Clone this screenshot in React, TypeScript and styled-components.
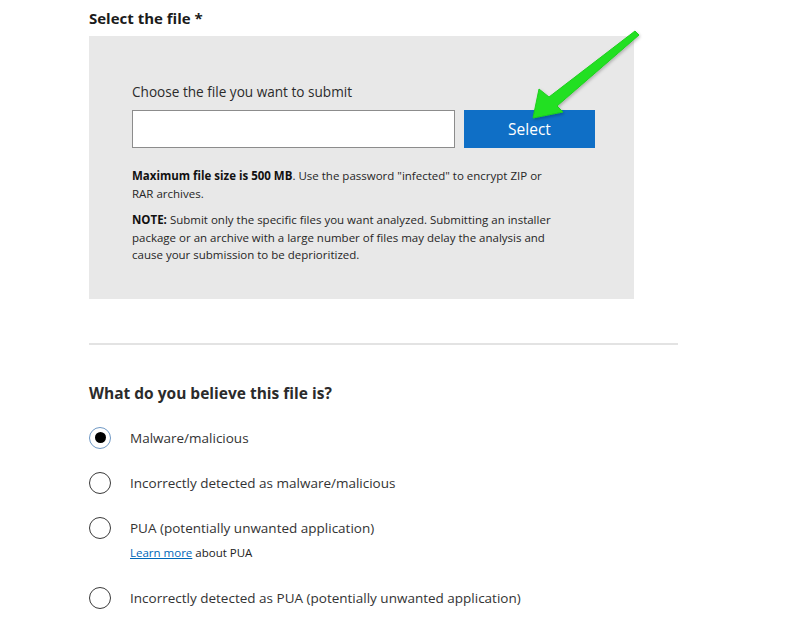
import React from "react";
import styled, { createGlobalStyle } from "styled-components";

const Global = createGlobalStyle`
  html, body { margin: 0; padding: 0; background: #ffffff; }
  body { font-family: "Open Sans", "Noto Sans", Arial, sans-serif; color: #262626; }
  * { box-sizing: border-box; }
`;

const Page = styled.div`
  position: relative;
  width: 800px;
  height: 634px;
  overflow: hidden;
  padding: 8px 0 0 89px;
`;

const SectionTitle = styled.h2`
  margin: 0;
  font-size: 15px;
  line-height: 20px;
  font-weight: 700;
  color: #1b1b1b;
`;

const Panel = styled.div`
  margin-top: 8px;
  width: 545px;
  background: #e8e8e8;
  padding: 46px 0 35px 43px;
`;

const Label = styled.div`
  font-size: 13.6px;
  line-height: 20px;
  color: #2b2b2b;
`;

const InputRow = styled.div`
  display: flex;
  gap: 9px;
  margin-top: 8px;
`;

const FileInput = styled.div`
  width: 323px;
  height: 38px;
  background: #ffffff;
  border: 1px solid #8c8c8c;
`;

const SelectButton = styled.button`
  width: 131px;
  height: 38px;
  border: none;
  background: #0f6fc6;
  color: #ffffff;
  font-family: inherit;
  font-size: 15.5px;
  padding: 0;
  cursor: pointer;
`;

const Notes = styled.div`
  margin-top: 19px;
  width: 425px;
  display: flex;
  flex-direction: column;
  gap: 9px;
`;

const Note = styled.p`
  margin: 0;
  font-size: 11.5px;
  line-height: 17.5px;
  color: #262626;
  b { font-weight: 700; color: #111; }
`;

const Divider = styled.hr`
  margin: 44px 0 0 0;
  width: 589px;
  border: none;
  border-top: 2px solid #e3e3e3;
`;

const Question = styled.h2`
  margin: 37px 0 0 0;
  font-size: 15.5px;
  line-height: 22px;
  font-weight: 700;
  color: #2b2b2b;
`;

const Options = styled.div`
  margin-top: 23px;
  display: flex;
  flex-direction: column;
  gap: 23px;
`;

const Option = styled.div`
  display: flex;
  align-items: flex-start;
  gap: 19px;
`;

const Radio = styled.span<{ $checked?: boolean }>`
  flex: none;
  width: 22px;
  height: 22px;
  border-radius: 50%;
  border: ${(p) => (p.$checked ? "1.5px solid #6f98c4" : "1.5px solid #3a3a3a")};
  background: #fff;
  display: flex;
  align-items: center;
  justify-content: center;
  &::after {
    content: "";
    display: ${(p) => (p.$checked ? "block" : "none")};
    width: 11px;
    height: 11px;
    border-radius: 50%;
    background: #000;
  }
`;

const OptionText = styled.div`
  display: flex;
  flex-direction: column;
`;

const OptionLabel = styled.span`
  font-size: 13.5px;
  line-height: 22px;
  color: #333333;
`;

const SubText = styled.span`
  margin: 5px 0 3px 0;
  font-size: 11.5px;
  line-height: 17px;
  color: #222;
  a { color: #0067b8; text-decoration: underline; }
`;

const Arrow = styled.svg`
  position: absolute;
  left: 0;
  top: 0;
  pointer-events: none;
`;

export default function App() {
  return (
    <>
      <Global />
      <Page>
        <SectionTitle>Select the file *</SectionTitle>
        <Panel>
          <Label>Choose the file you want to submit</Label>
          <InputRow>
            <FileInput />
            <SelectButton>Select</SelectButton>
          </InputRow>
          <Notes>
            <Note>
              <b>Maximum file size is 500 MB</b>. Use the password "infected" to encrypt ZIP or RAR archives.
            </Note>
            <Note>
              <b>NOTE:</b> Submit only the specific files you want analyzed. Submitting an installer package or an
              archive with a large number of files may delay the analysis and cause your submission to be
              deprioritized.
            </Note>
          </Notes>
        </Panel>
        <Divider />
        <Question>What do you believe this file is?</Question>
        <Options>
          <Option>
            <Radio $checked />
            <OptionLabel>Malware/malicious</OptionLabel>
          </Option>
          <Option>
            <Radio />
            <OptionLabel>Incorrectly detected as malware/malicious</OptionLabel>
          </Option>
          <Option>
            <Radio />
            <OptionText>
              <OptionLabel>PUA (potentially unwanted application)</OptionLabel>
              <SubText>
                <a href="#">Learn more</a> about PUA
              </SubText>
            </OptionText>
          </Option>
          <Option>
            <Radio />
            <OptionLabel>Incorrectly detected as PUA (potentially unwanted application)</OptionLabel>
          </Option>
        </Options>
        <Arrow width="800" height="634" viewBox="0 0 800 634">
          <defs>
            <filter id="sh" x="-20%" y="-20%" width="140%" height="140%">
              <feDropShadow dx="1" dy="1.5" stdDeviation="1.5" floodColor="#000" floodOpacity="0.25" />
            </filter>
          </defs>
          <polygon
            points="533,118 539,89 549,97 635,31 639,35 557,106 563,112"
            fill="#22e022"
            stroke="#1ccf1c"
            strokeWidth="1"
            strokeLinejoin="round"
            filter="url(#sh)"
          />
        </Arrow>
      </Page>
    </>
  );
}
